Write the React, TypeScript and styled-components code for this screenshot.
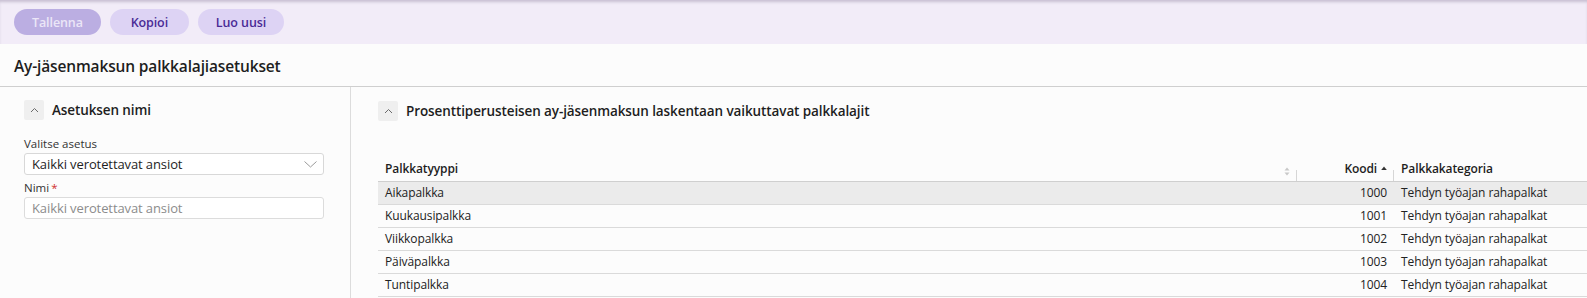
import React from 'react';
import styled, { createGlobalStyle } from 'styled-components';

const GlobalStyle = createGlobalStyle`
  html, body {
    margin: 0;
    padding: 0;
    background: #fcfcfc;
    overflow: hidden;
  }
  body {
    font-family: "Open Sans", "Noto Sans", sans-serif;
    color: #222;
  }
  * { box-sizing: border-box; }
`;

const Toolbar = styled.div`
  height: 44px;
  background: #f2ecf8;
  box-shadow: inset 0 3px 3px -1px rgba(120, 110, 140, 0.35);
  display: flex;
  align-items: flex-start;
  gap: 9px;
  padding: 9px 14px 0;
`;

const PillButton = styled.button<{ $disabled?: boolean }>`
  height: 26px;
  min-width: 79px;
  border: none;
  border-radius: 13px;
  padding: 0 18px;
  font-family: inherit;
  font-size: 12.5px;
  font-weight: 600;
  letter-spacing: -0.1px;
  cursor: pointer;
  background: ${(p) => (p.$disabled ? '#bbaee2' : '#ddd3f4')};
  color: ${(p) => (p.$disabled ? '#ebe6f7' : '#4a2b96')};
`;

const PageHeader = styled.div`
  height: 43px;
  display: flex;
  align-items: center;
  padding: 2px 14px 0;
  border-bottom: 1px solid #cfcfcf;
`;

const PageTitle = styled.h1`
  margin: 0;
  font-size: 15.5px;
  font-weight: 600;
  letter-spacing: -0.15px;
  color: #1e1e1e;
`;

const Content = styled.div`
  display: flex;
  min-height: 212px;
`;

const LeftPanel = styled.div`
  width: 351px;
  flex: none;
  border-right: 1px solid #dcdcdc;
  padding: 13px 26px 0 24px;
`;

const RightPanel = styled.div`
  flex: 1;
  min-width: 0;
  overflow: hidden;
  padding: 14px 0 0 27px;
`;

const SectionHeader = styled.div`
  display: flex;
  align-items: center;
  gap: 8px;
  height: 20px;
`;

const CollapseButton = styled.button`
  width: 20px;
  height: 20px;
  padding: 0;
  border: none;
  border-radius: 2px;
  background: #efefef;
  display: flex;
  align-items: center;
  justify-content: center;
`;

const SectionTitle = styled.h2`
  margin: 0;
  font-size: 13.5px;
  font-weight: 600;
  letter-spacing: -0.1px;
  color: #1e1e1e;
`;

const FieldGroup = styled.div`
  margin-top: 17px;
`;

const Field = styled.div`
  margin-top: 6px;
  display: flex;
  flex-direction: column;
  gap: 2px;
`;

const Label = styled.label`
  font-size: 11.5px;
  color: #333;
  line-height: 14px;
`;

const Required = styled.span`
  color: #d0312d;
  margin-left: 2px;
`;

const SelectBox = styled.div`
  height: 22px;
  border: 1px solid #d8d8d8;
  border-radius: 3px;
  background: #fff;
  display: flex;
  align-items: center;
  justify-content: space-between;
  padding: 0 6px 0 7px;
  font-size: 13px;
  letter-spacing: -0.1px;
  color: #1e1e1e;
`;

const TextInput = styled.input`
  height: 22px;
  border: 1px solid #dcdcdc;
  border-radius: 3px;
  background: #fff;
  padding: 0 7px;
  font-family: inherit;
  font-size: 13px;
  letter-spacing: -0.1px;
  color: #1e1e1e;
  &::placeholder {
    color: #8c8c8c;
  }
`;

const Table = styled.table`
  margin-top: 36px;
  width: 1340px;
  table-layout: fixed;
  border-collapse: collapse;
  font-size: 12px;
  letter-spacing: -0.1px;
`;

const HeadCell = styled.th<{ $align?: 'left' | 'right'; $divider?: boolean }>`
  position: relative;
  height: 24px;
  padding: 0 7px;
  text-align: ${(p) => p.$align ?? 'left'};
  font-weight: 600;
  color: #1e1e1e;
  border-bottom: 1px solid #cfcfcf;
  white-space: nowrap;
  &::after {
    content: '';
    display: ${(p) => (p.$divider ? 'block' : 'none')};
    position: absolute;
    right: 0;
    bottom: 0;
    width: 1px;
    height: 11px;
    background: #d6d6d6;
  }
`;

const HeadInner = styled.span`
  display: inline-flex;
  align-items: center;
  gap: 4px;
`;

const SortSlot = styled.span`
  position: absolute;
  right: 7px;
  top: 6px;
`;

const Row = styled.tr<{ $active?: boolean }>`
  background: ${(p) => (p.$active ? '#ebebeb' : 'transparent')};
`;

const Cell = styled.td<{ $align?: 'left' | 'right' }>`
  height: 23px;
  padding: 0 7px;
  text-align: ${(p) => p.$align ?? 'left'};
  border-bottom: 1px solid #dadada;
  color: #222;
  white-space: nowrap;
`;

const ChevronUp = () => (
  <svg width="9" height="6" viewBox="0 0 9 6" fill="none">
    <path d="M1 5L4.5 1.5L8 5" stroke="#6b6b6b" strokeWidth="1" />
  </svg>
);

const ChevronDown = () => (
  <svg width="13" height="7" viewBox="0 0 13 7" fill="none">
    <path d="M0.5 0.5L6.5 6L12.5 0.5" stroke="#9a9a9a" strokeWidth="1" />
  </svg>
);

const SortBoth = () => (
  <svg width="6" height="9" viewBox="0 0 6 9">
    <path d="M3 0.5L5.5 3.5H0.5Z" fill="#c8c8c8" />
    <path d="M3 8.5L5.5 5.5H0.5Z" fill="#c8c8c8" />
  </svg>
);

const SortAsc = () => (
  <svg width="6" height="5" viewBox="0 0 6 5">
    <path d="M3 0.5L5.8 4H0.2Z" fill="#333" />
  </svg>
);

const rows = [
  { name: 'Aikapalkka', code: 1000 },
  { name: 'Kuukausipalkka', code: 1001 },
  { name: 'Viikkopalkka', code: 1002 },
  { name: 'Päiväpalkka', code: 1003 },
  { name: 'Tuntipalkka', code: 1004 },
];

const App: React.FC = () => {
  return (
    <>
      <GlobalStyle />
      <Toolbar>
        <PillButton $disabled>Tallenna</PillButton>
        <PillButton>Kopioi</PillButton>
        <PillButton>Luo uusi</PillButton>
      </Toolbar>
      <PageHeader>
        <PageTitle>Ay-jäsenmaksun palkkalajiasetukset</PageTitle>
      </PageHeader>
      <Content>
        <LeftPanel>
          <SectionHeader>
            <CollapseButton aria-label="Pienennä">
              <ChevronUp />
            </CollapseButton>
            <SectionTitle>Asetuksen nimi</SectionTitle>
          </SectionHeader>
          <FieldGroup>
            <Field>
              <Label>Valitse asetus</Label>
              <SelectBox>
                <span>Kaikki verotettavat ansiot</span>
                <ChevronDown />
              </SelectBox>
            </Field>
            <Field>
              <Label>
                Nimi<Required>*</Required>
              </Label>
              <TextInput placeholder="Kaikki verotettavat ansiot" />
            </Field>
          </FieldGroup>
        </LeftPanel>
        <RightPanel>
          <SectionHeader>
            <CollapseButton aria-label="Pienennä">
              <ChevronUp />
            </CollapseButton>
            <SectionTitle>Prosenttiperusteisen ay-jäsenmaksun laskentaan vaikuttavat palkkalajit</SectionTitle>
          </SectionHeader>
          <Table>
            <colgroup>
              <col style={{ width: 919 }} />
              <col style={{ width: 97 }} />
              <col />
            </colgroup>
            <thead>
              <tr>
                <HeadCell $divider>
                  Palkkatyyppi
                  <SortSlot>
                    <SortBoth />
                  </SortSlot>
                </HeadCell>
                <HeadCell $align="right" $divider>
                  <HeadInner>
                    Koodi
                    <SortAsc />
                  </HeadInner>
                </HeadCell>
                <HeadCell>Palkkakategoria</HeadCell>
              </tr>
            </thead>
            <tbody>
              {rows.map((r, i) => (
                <Row key={r.code} $active={i === 0}>
                  <Cell>{r.name}</Cell>
                  <Cell $align="right">{r.code}</Cell>
                  <Cell>Tehdyn työajan rahapalkat</Cell>
                </Row>
              ))}
            </tbody>
          </Table>
        </RightPanel>
      </Content>
    </>
  );
};

export default App;
